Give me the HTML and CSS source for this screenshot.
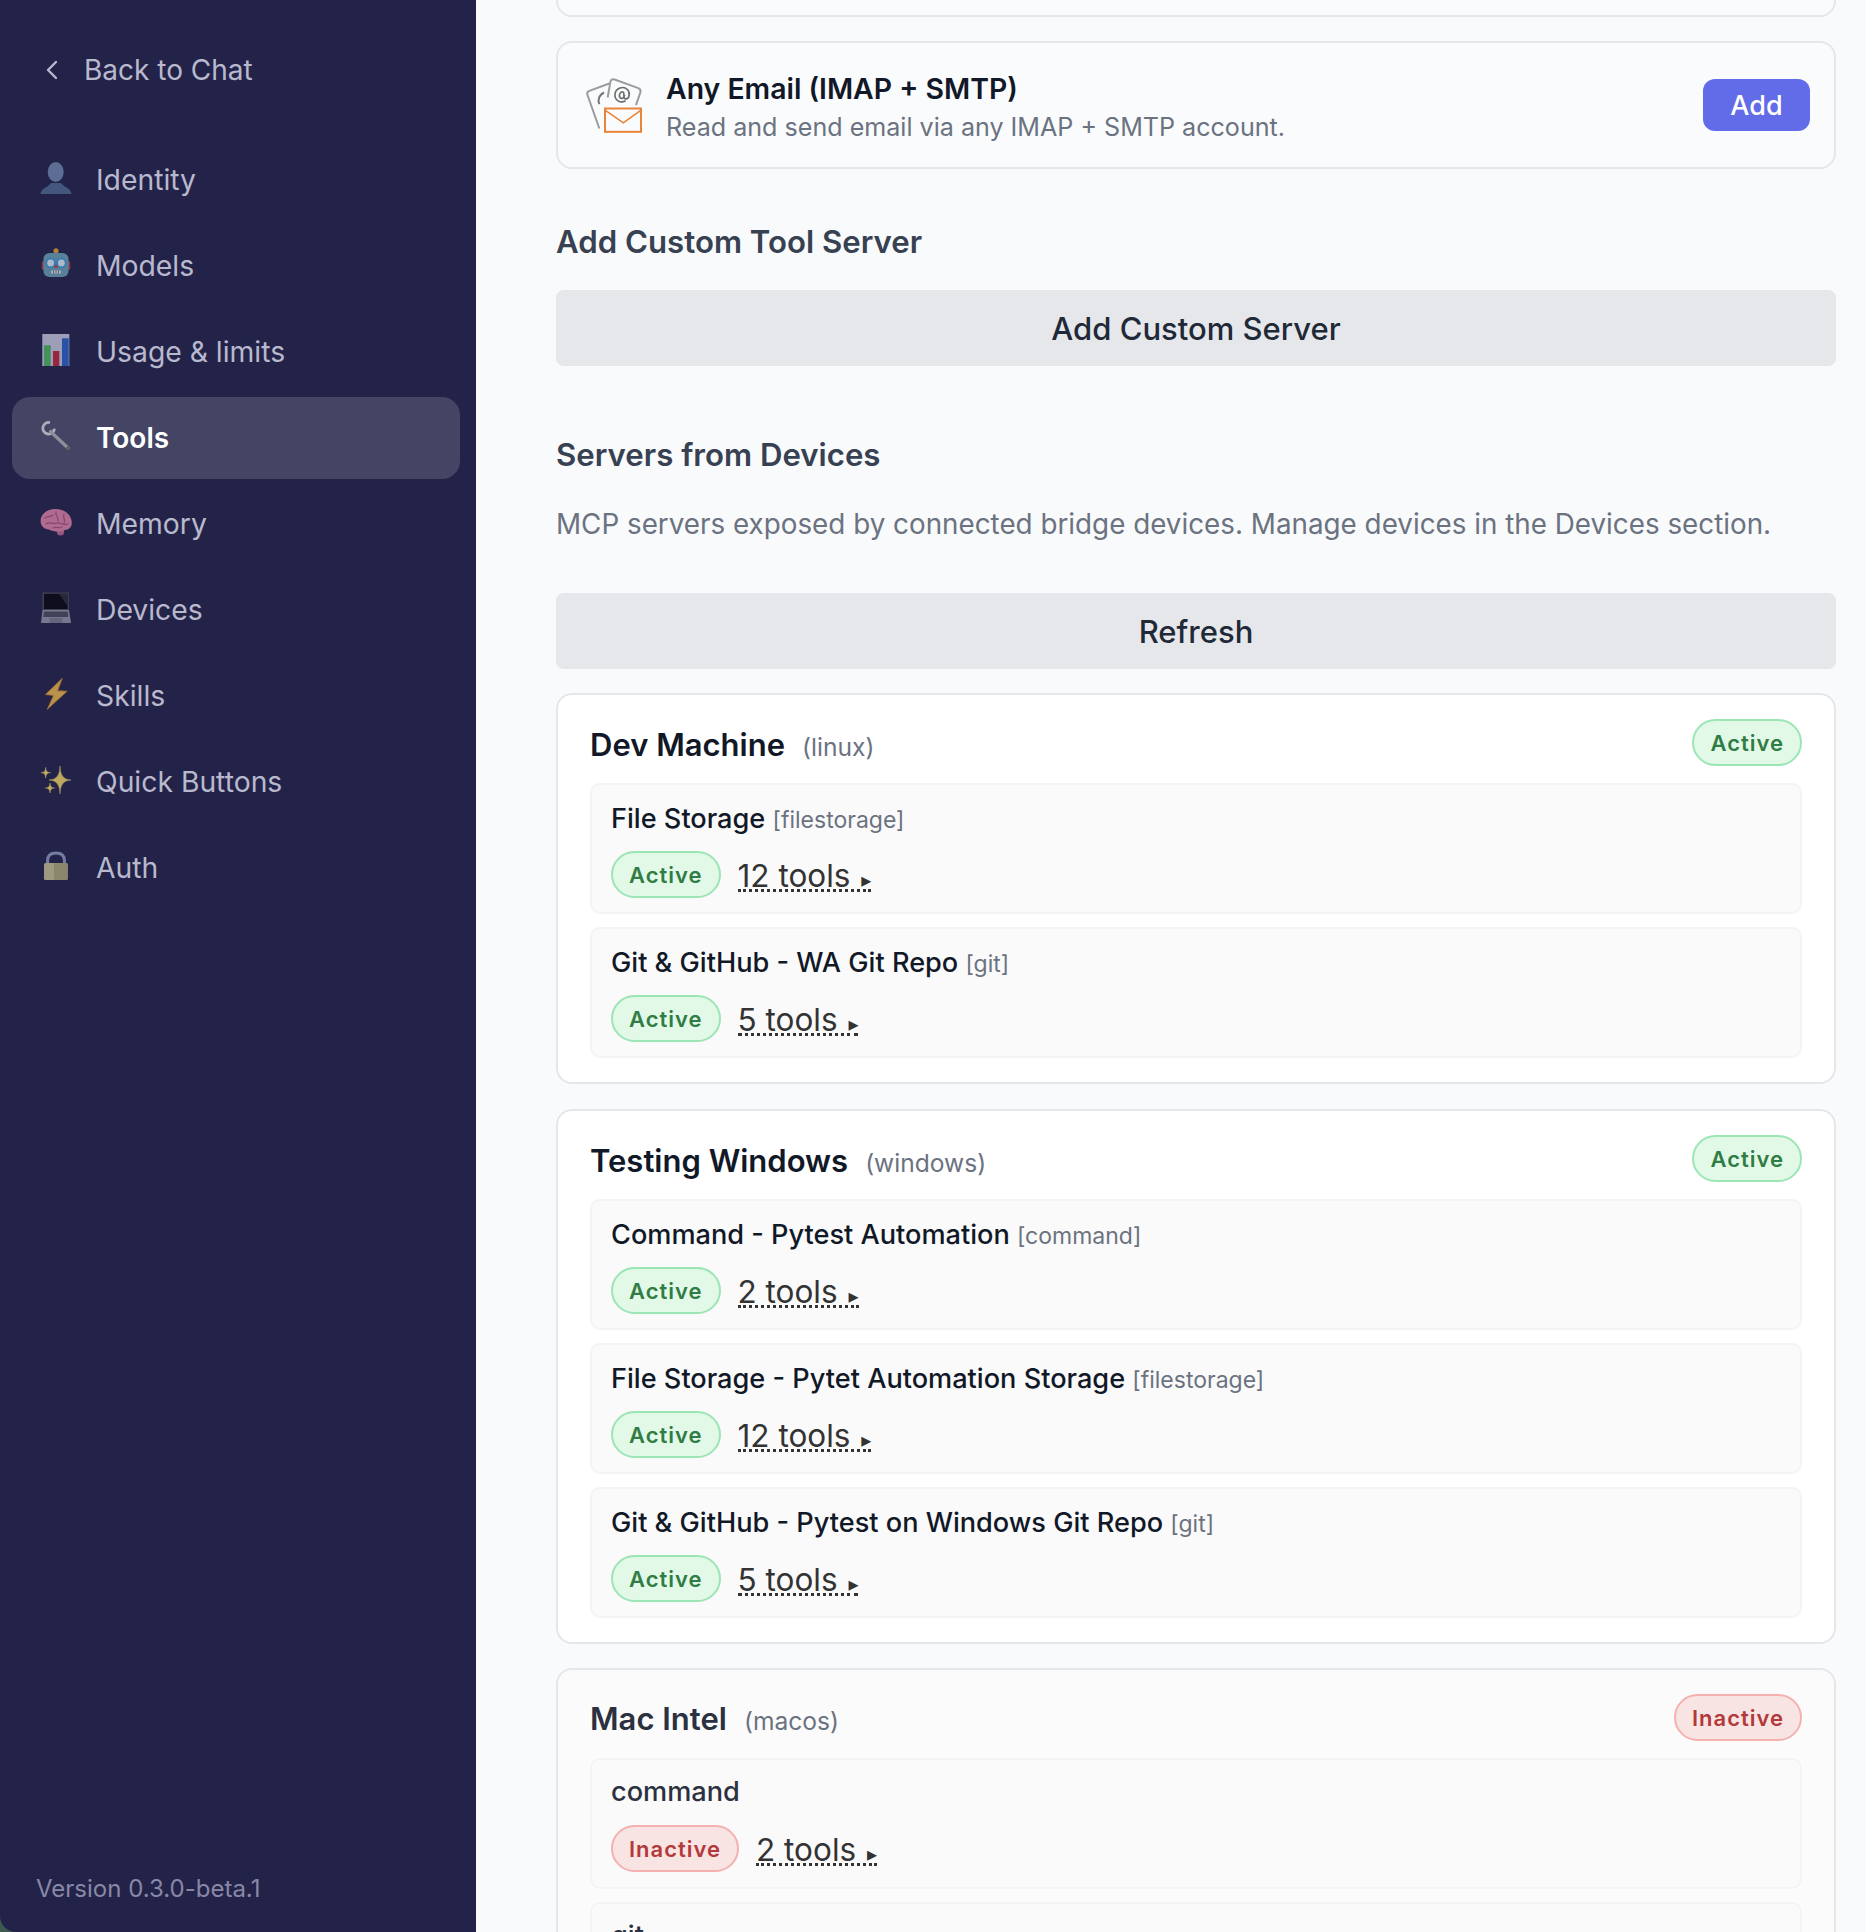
FILE: index.html
```html
<!DOCTYPE html>
<html lang="en">

<head>
  <meta charset="UTF-8" />
  <title>Settings - Tools</title>
  <meta name="viewport" content="width=device-width, initial-scale=1" />
  <link rel="stylesheet" href="styles.css">
</head>

<body>
  <div class="app">
    <aside class="sidebar">
      <a class="back-link" href="#">
        <svg class="back-chevron" viewBox="0 0 14 20" width="14" height="20"><path d="M11 2 L3 10 L11 18" fill="none" stroke="currentColor" stroke-width="2.4" stroke-linecap="round" stroke-linejoin="round"/></svg>
        <span>Back to Chat</span>
      </a>

      <nav class="nav">
        <a class="nav-item" href="#">
          <svg class="nav-icon" viewBox="0 0 32 32">
            <ellipse cx="15.7" cy="10" rx="8" ry="10" fill="#6f88ad"/>
            <path d="M0.5 32 C1 26 8 25.5 11 21 L21 21 C24 25.5 31 26 31.5 32 Z" fill="#50698f"/>
          </svg>
          <span>Identity</span>
        </a>
        <a class="nav-item" href="#">
          <svg class="nav-icon" viewBox="0 0 32 32">
            <rect x="1.8" y="13" width="3" height="9" rx="1.4" fill="#b0413e"/>
            <rect x="27.2" y="13" width="3" height="9" rx="1.4" fill="#b0413e"/>
            <circle cx="16" cy="2.8" r="2.6" fill="#e0a030"/>
            <rect x="3.4" y="5" width="25.2" height="24" rx="6" fill="#6aa0b4"/>
            <circle cx="10.6" cy="15" r="4.4" fill="#dcecf4" stroke="#3f9ad6" stroke-width="2"/>
            <circle cx="21.4" cy="15" r="4.4" fill="#dcecf4" stroke="#3f9ad6" stroke-width="2"/>
            <path d="M16 15.5 L18 20 H14 Z" fill="#c8413e"/>
            <rect x="11" y="22.5" width="10" height="3" rx="1" fill="#e4e8ea"/>
            <path d="M13.5 22.5 V25.5 M16 22.5 V25.5 M18.5 22.5 V25.5" stroke="#42586a" stroke-width="0.8"/>
          </svg>
          <span>Models</span>
        </a>
        <a class="nav-item" href="#">
          <svg class="nav-icon" viewBox="0 0 32 32">
            <rect x="2.3" y="0" width="27" height="32" fill="#c5c9dc"/>
            <rect x="4" y="11.3" width="6.7" height="20.7" fill="#4fb660"/>
            <rect x="13" y="17" width="6.3" height="15" fill="#bb2a3e"/>
            <rect x="22" y="4.3" width="6.7" height="27.7" fill="#2a62c8"/>
          </svg>
          <span>Usage &amp; limits</span>
        </a>
        <a class="nav-item nav-item-active" href="#">
          <svg class="nav-icon" viewBox="0 0 32 32">
            <path d="M10 2.6 A5.8 5.8 0 1 0 14.4 8.6" fill="none" stroke="#d0d2d8" stroke-width="2.8"/>
            <path d="M10.5 11.5 L28 28" stroke="#a8a8ae" stroke-width="3.2" stroke-linecap="round"/>
            <circle cx="28" cy="28" r="1.5" fill="#4a4a60" stroke="#8a7a68" stroke-width="1"/>
          </svg>
          <span>Tools</span>
        </a>
        <a class="nav-item" href="#">
          <svg class="nav-icon" viewBox="0 0 32 32">
            <circle cx="20.5" cy="26" r="3.6" fill="#c06a90"/>
            <path d="M0.6 15 C0.6 8 7 3 15 3 C25 3 31.8 9 31.8 17 C31.8 21 29 24 25 24 C20 26.5 14 26 9 23.5 C4 23 0.6 20 0.6 15 Z" fill="#e084aa"/>
            <path d="M5 12 C8 9 10 12 13 9 M16 6 C15 10 19 11 18 15 M24 8 C22 12 26 13 24 17 M6 18 C10 15 13 19 17 17 C20 16 23 20 28 18 M13 22 C16 20 19 23 22 21" fill="none" stroke="#b0527c" stroke-width="1.3" stroke-linecap="round"/>
          </svg>
          <span>Memory</span>
        </a>
        <a class="nav-item" href="#">
          <svg class="nav-icon" viewBox="0 0 32 32">
            <path d="M2.5 0.5 H29 V18 H2.5 Z" fill="#4a4a58"/>
            <path d="M4 1.8 H27.6 V17 H4 Z" fill="#06060e"/>
            <path d="M19 1.8 H27.6 V14 Z" fill="#2b2b38"/>
            <path d="M2.5 18 H29 L31 31 H1 Z" fill="#9494a8"/>
            <path d="M4 19.5 H27.6 L28.4 25 H3.2 Z" fill="#4c4c5c"/>
            <rect x="9.5" y="26" width="13" height="5" fill="#7c7c90"/>
          </svg>
          <span>Devices</span>
        </a>
        <a class="nav-item" href="#">
          <svg class="nav-icon" viewBox="0 0 32 32">
            <path d="M22.3 0.3 L5.5 16.5 L13.5 17.5 L7.3 31.3 L27.2 13.2 L17.6 12.8 Z" fill="#e9b94c" stroke="#d0802c" stroke-width="0.9" stroke-linejoin="round"/>
          </svg>
          <span>Skills</span>
        </a>
        <a class="nav-item" href="#">
          <svg class="nav-icon" viewBox="0 0 32 32">
            <path d="M20 2 Q20 16 31 16 Q20 16 20 30 Q20 16 9 16 Q20 16 20 2 Z" fill="#f4d668" stroke="#f4d668" stroke-width="0.5"/>
            <path d="M5.7 3.4 Q5.7 8.7 10.5 8.7 Q5.7 8.7 5.7 14 Q5.7 8.7 1 8.7 Q5.7 8.7 5.7 3.4 Z" fill="#f4d668" stroke="#f4d668" stroke-width="0.5"/>
            <path d="M10 19 Q10 24 14.6 24 Q10 24 10 29 Q10 24 5.4 24 Q10 24 10 19 Z" fill="#f4d668" stroke="#f4d668" stroke-width="0.5"/>
          </svg>
          <span>Quick Buttons</span>
        </a>
        <a class="nav-item" href="#">
          <svg class="nav-icon" viewBox="0 0 32 32">
            <path d="M7.6 15 V10.5 C7.6 5.5 11 3 16 3 C21 3 24.4 5.5 24.4 10.5 V15" fill="none" stroke="#8e9abc" stroke-width="3"/>
            <rect x="4" y="13" width="23.7" height="17" rx="1.5" fill="#c7c293"/>
            <rect x="14" y="13" width="13.7" height="17" rx="1.5" fill="#ada877"/>
          </svg>
          <span>Auth</span>
        </a>
      </nav>

      <div class="version">Version 0.3.0-beta.1</div>
    </aside>

    <main class="content">
      <div class="tool-card tool-card-cut"></div>

      <div class="tool-card">
        <svg class="tool-logo" viewBox="42 48 180 176" width="60" height="59">
          <path d="M118 70 L58 92 Q50 95 52 103 L88 205" fill="none" stroke="#9c9c9c" stroke-width="6"/>
          <path d="M102 97 C88 104 82 118 88 132" fill="none" stroke="#777" stroke-width="6"/>
          <path d="M113 112 L121 66 Q123 55 134 58 L205 84 Q214 88 211 97 L198 135" fill="none" stroke="#9c9c9c" stroke-width="6"/>
          <path d="M167 122 C150 131 133 120 135 102 C137 84 160 76 172 88 C182 98 178 118 166 116 C158 114 164 98 160 96 C152 92 145 104 150 112 C154 118 162 114 164 104" fill="none" stroke="#6e6e6e" stroke-width="5"/>
          <rect x="105" y="145" width="108" height="70" fill="#fafbfc" stroke="#e8853a" stroke-width="6"/>
          <path d="M105 150 L160 188 L213 150" fill="none" stroke="#e8853a" stroke-width="5"/>
        </svg>
        <div class="tool-info">
          <div class="tool-name">Any Email (IMAP + SMTP)</div>
          <div class="tool-desc">Read and send email via any IMAP + SMTP account.</div>
        </div>
        <button class="btn-add">Add</button>
      </div>

      <h3 class="section-title title-custom">Add Custom Tool Server</h3>
      <button class="btn-wide">Add Custom Server</button>

      <h3 class="section-title title-devices">Servers from Devices</h3>
      <p class="section-desc">MCP servers exposed by connected bridge devices. Manage devices in the Devices section.</p>
      <button class="btn-wide">Refresh</button>

      <section class="device-card">
        <div class="device-head">
          <div class="device-title"><span class="device-name">Dev Machine</span><span class="device-os">(linux)</span></div>
          <span class="badge badge-active">Active</span>
        </div>
        <div class="server-row">
          <div class="server-name">File Storage <span class="server-type">[filestorage]</span></div>
          <div class="server-meta"><span class="badge badge-active">Active</span><span class="tools-count">12 tools <i>▸</i></span></div>
        </div>
        <div class="server-row">
          <div class="server-name">Git &amp; GitHub - WA Git Repo <span class="server-type">[git]</span></div>
          <div class="server-meta"><span class="badge badge-active">Active</span><span class="tools-count">5 tools <i>▸</i></span></div>
        </div>
      </section>

      <section class="device-card">
        <div class="device-head">
          <div class="device-title"><span class="device-name">Testing Windows</span><span class="device-os">(windows)</span></div>
          <span class="badge badge-active">Active</span>
        </div>
        <div class="server-row">
          <div class="server-name">Command - Pytest Automation <span class="server-type">[command]</span></div>
          <div class="server-meta"><span class="badge badge-active">Active</span><span class="tools-count">2 tools <i>▸</i></span></div>
        </div>
        <div class="server-row">
          <div class="server-name">File Storage - Pytet Automation Storage <span class="server-type">[filestorage]</span></div>
          <div class="server-meta"><span class="badge badge-active">Active</span><span class="tools-count">12 tools <i>▸</i></span></div>
        </div>
        <div class="server-row">
          <div class="server-name">Git &amp; GitHub - Pytest on Windows Git Repo <span class="server-type">[git]</span></div>
          <div class="server-meta"><span class="badge badge-active">Active</span><span class="tools-count">5 tools <i>▸</i></span></div>
        </div>
      </section>

      <section class="device-card device-offline">
        <div class="device-head">
          <div class="device-title"><span class="device-name">Mac Intel</span><span class="device-os">(macos)</span></div>
          <span class="badge badge-inactive">Inactive</span>
        </div>
        <div class="server-row">
          <div class="server-name">command</div>
          <div class="server-meta"><span class="badge badge-inactive">Inactive</span><span class="tools-count">2 tools <i>▸</i></span></div>
        </div>
        <div class="server-row">
          <div class="server-name">git</div>
        </div>
      </section>
    </main>
  </div>
</body>

</html>
```

FILE: styles.css
```css
* {
  box-sizing: border-box;
}

html,
body {
  margin: 0;
  height: 100%;
  overflow: hidden;
}

body {
  font-family: 'Inter', 'Liberation Sans', sans-serif;
  color: #1f2937;
}

.app {
  display: flex;
  height: 100vh;
  background: #3d5a50;
}

/* sidebar */

.sidebar {
  width: 476px;
  flex-shrink: 0;
  display: flex;
  flex-direction: column;
  padding: 0 16px 0 12px;
  background: #232349;
  border-bottom-left-radius: 16px;
}

.back-link {
  display: flex;
  align-items: center;
  gap: 25px;
  height: 40px;
  margin: 50px 0 49px 33px;
  font-size: 28px;
  color: #b9b9ce;
  text-decoration: none;
}

.back-chevron {
  flex-shrink: 0;
}

.nav {
  display: flex;
  flex-direction: column;
  gap: 4px;
}

.nav-item {
  display: flex;
  align-items: center;
  gap: 24px;
  height: 82px;
  padding-left: 28px;
  border-radius: 18px;
  font-size: 28.3px;
  color: #b9b9ce;
  text-decoration: none;
}

.nav-icon {
  width: 32px;
  height: 32px;
  flex-shrink: 0;
  margin-bottom: 4px;
  opacity: 0.75;
}

.nav-item-active {
  background: #444464;
  color: #fff;
  font-size: 28px;
  font-weight: 600;
}

.version {
  margin: auto 0 27px 24px;
  font-size: 24px;
  line-height: 32px;
  color: #8888a6;
}

/* main column */

.content {
  flex: 1;
  display: flex;
  flex-direction: column;
  padding: 0 30px 0 80px;
  background: #f9fafc;
  overflow: hidden;
}

.content > * {
  flex-shrink: 0;
}

.tool-card {
  display: flex;
  align-items: center;
  height: 128px;
  padding: 0 24px 0 26px;
  border: 2px solid #e5e7eb;
  border-radius: 16px;
  background: #fafbfc;
}

.tool-card-cut {
  height: 17px;
  margin-bottom: 24px;
  border-top: none;
  border-top-left-radius: 0;
  border-top-right-radius: 0;
}

.tool-logo {
  flex-shrink: 0;
  margin-right: 22px;
}

.tool-info {
  flex: 1;
  padding-top: 5px;
}

.tool-name {
  margin-bottom: 1px;
  font-size: 28.4px;
  line-height: 38px;
  font-weight: 600;
  color: #111827;
}

.tool-desc {
  font-size: 25.1px;
  line-height: 36px;
  color: #6b7280;
}

.btn-add {
  width: 107px;
  height: 52px;
  border: none;
  border-radius: 12px;
  background: #636ce8;
  color: #fff;
  font-family: inherit;
  font-size: 27px;
  font-weight: 500;
}

.section-title {
  margin: 0;
  font-size: 31.2px;
  line-height: 44px;
  font-weight: 600;
  color: #374151;
}

.title-custom {
  margin-top: 51px;
  margin-bottom: 26px;
}

.title-devices {
  margin-top: 67px;
}

.section-desc {
  margin: 27px 0 49px;
  font-size: 27.8px;
  line-height: 40px;
  color: #6b7280;
}

.btn-wide {
  height: 76px;
  border: none;
  border-radius: 8px;
  background: #e5e7eb;
  color: #1f2937;
  font-family: inherit;
  font-size: 31px;
  font-weight: 500;
}

/* device cards */

.device-card {
  margin-top: 25px;
  padding: 24px 32px 24px;
  border: 2px solid #e5e7eb;
  border-radius: 16px;
  background: #fff;
}

.btn-wide + .device-card {
  margin-top: 24px;
}

.device-head {
  display: flex;
  align-items: center;
  justify-content: space-between;
  margin-bottom: 17px;
}

.device-title {
  margin-top: 4px;
}

.device-name {
  font-size: 31px;
  font-weight: 600;
  color: #111827;
}

.device-os {
  margin-left: 17px;
  font-size: 24.6px;
  color: #6b7280;
}

.server-row {
  height: 131px;
  margin-bottom: 13px;
  padding: 15px 19px;
  border: 2px solid #f3f4f6;
  border-radius: 10px;
  background: #fafafa;
}

.server-row:last-child {
  margin-bottom: 0;
}

.server-name {
  font-size: 27.15px;
  line-height: 38px;
  font-weight: 500;
  color: #111827;
}

.server-type {
  font-size: 23px;
  font-weight: 400;
  color: #6b7280;
}

.server-meta {
  display: flex;
  align-items: center;
  gap: 17px;
  margin-top: 12px;
}

.badge {
  display: inline-flex;
  align-items: center;
  height: 47px;
  padding: 0 16px;
  border: 2px solid;
  border-radius: 24px;
  font-size: 22px;
  font-weight: 600;
  letter-spacing: 1px;
}

.badge-active {
  border-color: #9ae6b4;
  background: #e3f9e8;
  color: #2f7d45;
}

.badge-inactive {
  border-color: #f5b0b0;
  background: #f9e4e4;
  color: #b23a3a;
}

.tools-count {
  margin-top: 5px;
  border-bottom: 3px dotted #333;
  font-size: 31.5px;
  line-height: 27px;
  color: #333;
}

.tools-count i {
  margin-left: 2px;
  font-style: normal;
  font-size: 20px;
  line-height: 0;
  font-family: 'DejaVu Sans', sans-serif;
}

.device-offline {
  margin-top: 24px;
  background: #fbfbfc;
}

.device-offline .device-title {
  margin-top: 1px;
}

.device-offline .device-name {
  color: #2b3140;
}

.device-offline .server-row {
  padding-top: 13px;
}

.device-offline .server-meta {
  margin-top: 14px;
}

.device-offline .server-name {
  color: #2b3140;
}
```
